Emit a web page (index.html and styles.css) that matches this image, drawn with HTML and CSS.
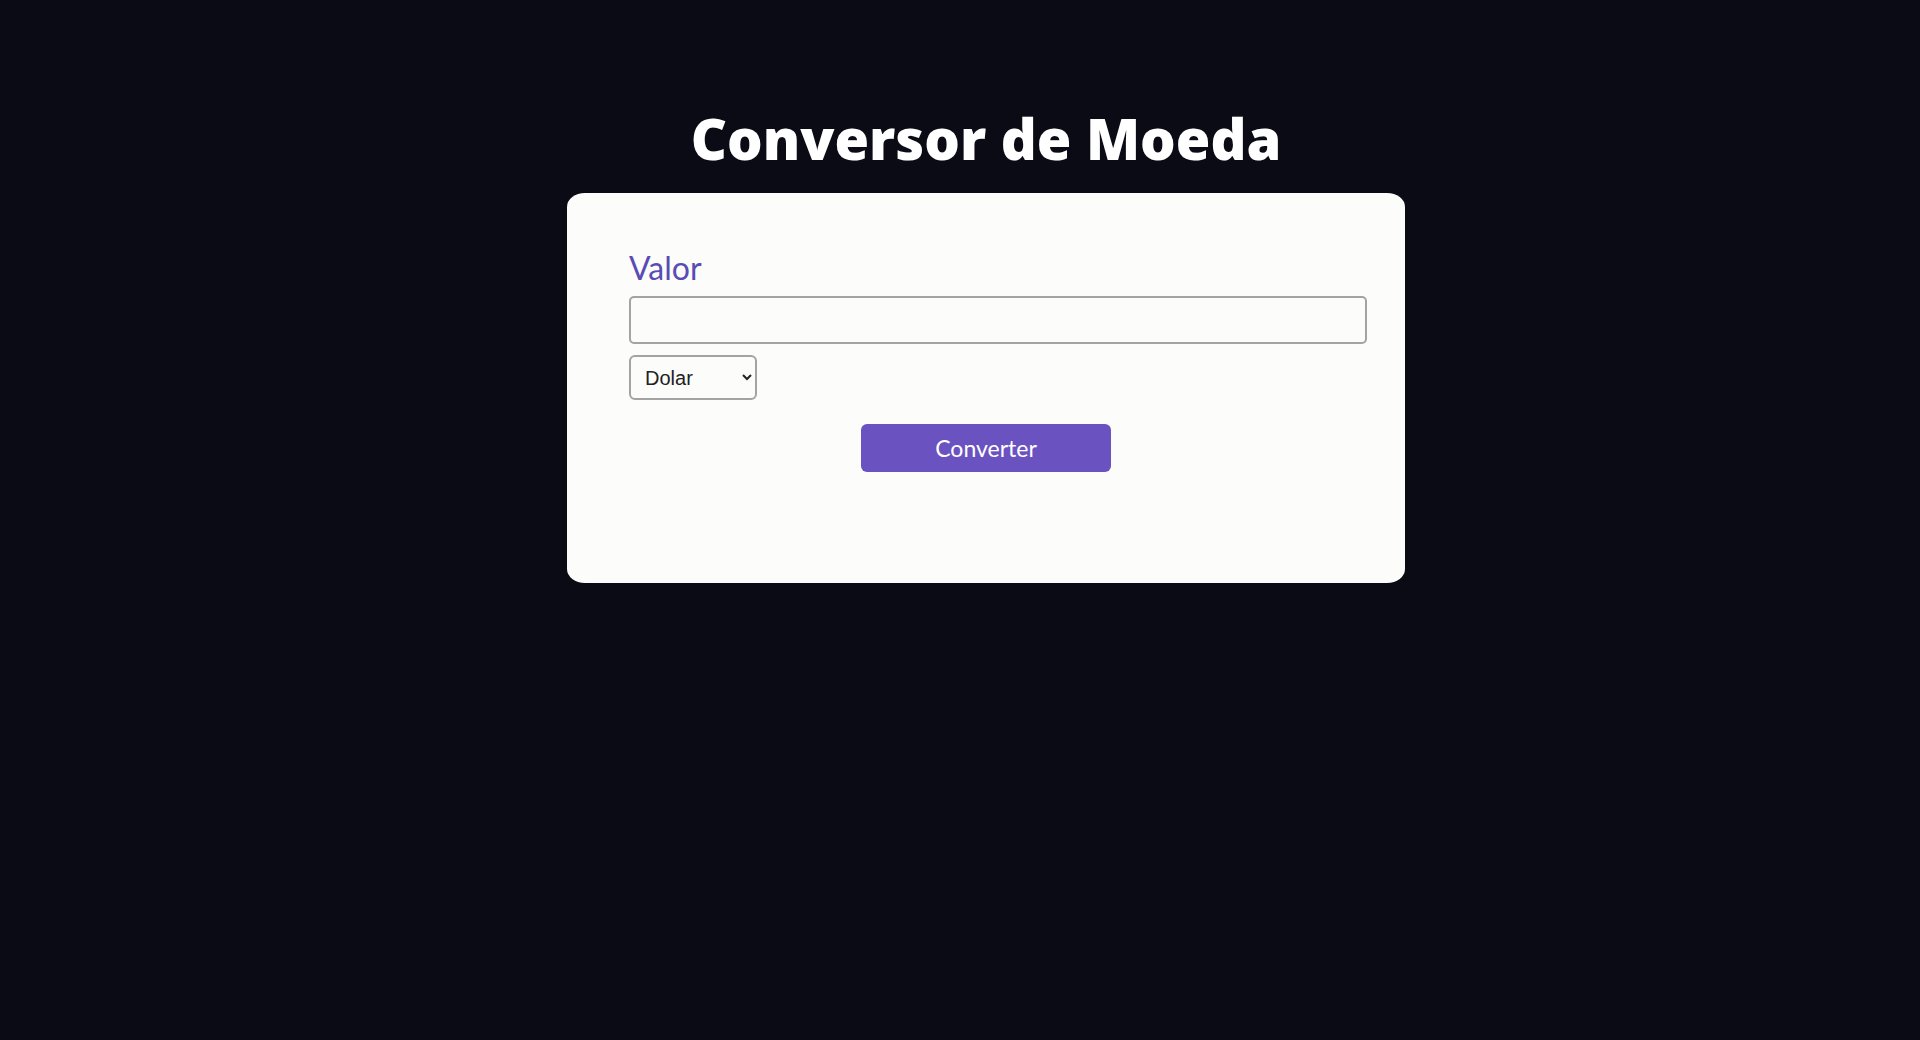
FILE: index.html
```html
<!DOCTYPE html>
<html lang="pt-BR">
<head>
<meta charset="utf-8">
<title>Conversor de Moeda</title>
<link rel="stylesheet" href="styles.css">
</head>
<body>
<div class="page">
  <h1 class="title">Conversor de Moeda</h1>
  <main class="card">
    <label class="label" for="valor">Valor</label>
    <input class="input" id="valor" type="text">
    <div class="select-wrap">
      <select class="select">
        <option>Dolar</option>
        <option>Euro</option>
      </select>
    </div>
    <div class="actions">
      <button class="btn" type="button">Converter</button>
    </div>
  </main>
</div>
</body>
</html>
```
FILE: styles.css
```css
html, body {
  margin: 0;
  padding: 0;
  background: #0b0b16;
  height: 100%;
}
body {
  font-family: Lato, "Noto Sans", sans-serif;
}
.page {
  padding-left: 52px;
  padding-top: 104px;
}
.title {
  margin: 0 0 21px 0;
  text-align: center;
  color: #ffffff;
  font-family: "Open Sans", Lato, sans-serif;
  font-weight: 800;
  font-size: 56px;
  line-height: 68px;
  letter-spacing: 0px;
}
.card {
  box-sizing: border-box;
  width: 838px;
  height: 390px;
  margin: 0 auto;
  padding: 57px 38px 0 62px;
  background: #fcfcfa;
  border-radius: 18px 18px 18px 18px / 14px 14px 14px 14px;
  display: flex;
  flex-direction: column;
  align-items: flex-start;
}
.label {
  color: #5a4cb4;
  font-size: 32px;
  line-height: 36px;
  font-family: Lato, sans-serif;
}
.input {
  box-sizing: border-box;
  margin-top: 10px;
  width: 738px;
  height: 48px;
  border: 2px solid #a3a3a3;
  border-radius: 5px;
  background: #fcfcfa;
}
.select-wrap {
  margin-top: 11px;
}
.select {
  box-sizing: border-box;
  width: 128px;
  height: 45px;
  padding: 0 8px 0 10px;
  border: 2px solid #a3a3a3;
  border-radius: 6px;
  background: #fcfcfa;
  font-family: "Liberation Sans", Arial, sans-serif;
  font-size: 20px;
  color: #222;
}
.actions {
  align-self: stretch;
  display: flex;
  justify-content: center;
  margin-top: 24px;
  margin-left: -12px;
  margin-right: 12px;
}
.btn {
  width: 250px;
  height: 48px;
  border: none;
  border-radius: 6px;
  background: #6a52c1;
  color: #ffffff;
  font-family: Lato, sans-serif;
  font-size: 23px;
  cursor: pointer;
}
```
